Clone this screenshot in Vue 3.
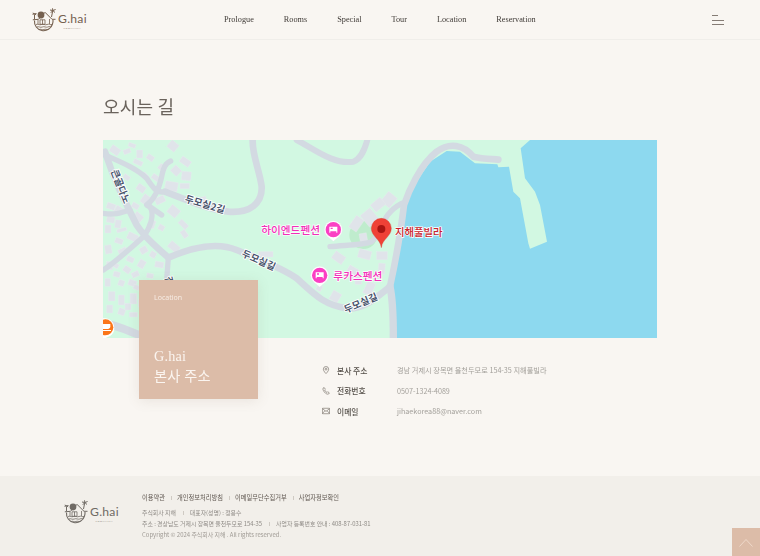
<script setup>
const navItems = ['Prologue', 'Rooms', 'Special', 'Tour', 'Location', 'Reservation']
const info = [
  { icon: 'pin', label: '본사 주소', value: '경남 거제시 장목면 율천두모로 154-35 지해풀빌라' },
  { icon: 'phone', label: '전화번호', value: '0507-1324-4089' },
  { icon: 'mail', label: '이메일', value: 'jihaekorea88@naver.com' }
]
const footerLinks = ['이용약관', '개인정보처리방침', '이메일무단수집거부', '사업자정보확인']
const logoStrokes = [
  ['M.8 11.800L6.500 11.300L13 4.300L20 11.300L23.500 11.300', 1],
  ['M2.500 12.500A9.200 9.200 0 0 0 20.500 16A9 9 0 0 0 21 12', 1.1],
  ['M4 16.500c2-1 3.500 1 5.500 0s3.500 1 5.500 0 3.500.7 5 0M4.800 19c2-1 3.500 1 5.500 0s3.500.8 5.500 0 2-.4 3-.6M7 21.500c2-.8 3.500.8 5 0s2.500.3 4 0', .8],
  ['M6 12v4.500M17.500 11v5M8 11.800h5v4.500h-5zM10.500 11.800v4.500', .8],
  ['M19.500 9L20.800 2.500M20.800 2.500L18 2M20.800 2.500L23.600 1.500M20.800 2.500L18.800 4.800M20.800 2.500L23 4.500M20.800 2.500L20.500 .3', 1],
  ['M2.500 11V6.500M.5 6.300L4.500 5.500M.8 5L4.200 6.800', 1]
]
const buildings = [
  [30,35,30,22,35],[70,42,22,14,-20],[85,25,22,12,20],[110,45,18,24,0],[100,75,28,14,25],[140,60,22,16,35],
  [205,20,28,26,40],[175,90,24,18,40],[240,70,32,20,35],[215,95,26,24,45],[245,110,28,26,5],[155,120,24,16,35],
  [195,140,38,28,10],[125,180,24,28,35],[165,185,30,20,-25],[240,145,28,16,0],[300,185,20,22,-15],[205,215,32,28,40],
  [100,235,28,24,40],[235,260,30,16,45],[245,285,16,24,-35],[205,325,34,22,40],[150,350,18,18,30],[120,335,22,20,-30],
  [82,295,32,22,25],[45,310,24,16,20],[45,255,18,24,10],[20,245,24,18,10],[20,205,26,18,20],[45,215,24,20,30],
  [15,270,18,24,0],[50,280,30,10,-15],[15,330,20,26,-10],[55,340,26,16,-25],[80,365,22,16,25],[115,375,20,24,30],
  [165,380,26,18,10],[70,395,22,18,35],[40,410,20,16,15],[95,410,22,16,-25],[20,380,18,24,0],[15,430,16,24,0],
  [55,435,18,18,20],[85,435,24,18,20],[25,470,20,28,0],[55,480,18,30,0],[90,475,20,32,0],[20,510,18,24,0],
  [55,520,20,20,20],[88,532,24,14,0],[115,492,16,24,0],[475,350,44,16,0],[755,245,28,42,35],[790,225,38,44,-40],
  [850,175,34,38,40],[815,195,38,28,-40],[780,295,22,36,-10],[775,345,38,26,15],[698,355,36,26,35],
  [740,395,32,32,30],[830,350,32,24,0],[835,385,20,32,5],[795,440,26,40,25],[765,420,20,28,0],[692,470,28,30,30],[650,450,16,18,30],
  [110,150,26,20,35],[60,175,20,16,40],[95,205,22,16,30],[70,120,20,14,35],[125,115,20,16,45],[145,255,20,24,20],
  [175,270,18,16,30],[100,450,18,14,20],[140,415,20,14,10],[75,505,18,20,0],[120,440,18,14,30],[40,385,16,14,30]
]
</script>

<template>
  <div class="page">
    <header class="header">
      <a class="logo">
        <svg class="logo-mark" viewBox="0 0 24 24" aria-hidden="true">
          <circle cx="9" cy="7" r="3.400" />
          <path v-for="(s, i) in logoStrokes" :key="i" :d="s[0]" :stroke-width="s[1]" />
        </svg>
        <span class="logo-text"><b>G.hai</b><small>POOLVILLA</small></span>
      </a>
      <nav class="nav">
        <a v-for="item in navItems" :key="item">{{ item }}</a>
      </nav>
      <button class="burger" aria-label="menu"><i class="short"></i><i></i><i></i></button>
    </header>

    <main class="main">
      <h1>오시는 길</h1>
      <div class="map">
        <svg viewBox="9 15 1662 594" preserveAspectRatio="none" aria-label="지도">
          <rect x="9" y="15" width="1662" height="594" fill="#d2f8e2" />
          <path fill="#8dd9ef" d="M1290 15L1262 40L1275 130L1305 170L1320 210L1341 320L1290 341L1285 325L1260 190L1240 170L1227 95L1195 97L1192 88L1125 85L1080 50L1040 48L990 80L950 140L910 215L890 330L877 410L887 415L872 450L880 480L880 609L1671 609L1671 15Z" />
          <ellipse cx="790" cy="300" rx="42" ry="42" fill="#bfeccd" />
          <g fill="#e0e4ea" stroke="#e8ebef" stroke-width="1">
            <rect v-for="(b, i) in buildings" :key="i" :x="b[0]" :y="b[1]" :width="b[2]" :height="b[3]" :transform="`rotate(${b[4]} ${b[0] + b[2] / 2} ${b[1] + b[3] / 2})`" />
          </g>
          <g fill="none" stroke="#d3dae2" stroke-width="20" stroke-linecap="round" stroke-linejoin="round">
            <path d="M458 15C456 60 480 110 485 155C487 205 450 235 385 230C320 222 260 195 195 170" />
            <path d="M590 15C640 40 700 90 760 80C785 70 795 40 802 15" stroke-width="18" />
            <path d="M15 60C60 80 110 100 140 130C160 160 170 175 195 170" stroke-width="16" />
            <path d="M212 78C195 85 190 100 185 125C175 170 160 195 140 210C150 215 170 230 185 240" stroke-width="16" />
            <path d="M150 215C165 240 150 280 130 305" stroke-width="16" />
            <path d="M15 50C40 130 70 190 110 270C135 310 175 340 205 368C280 335 350 320 410 345C480 375 540 395 590 430C640 475 670 510 740 520C790 525 825 490 870 455C885 385 900 310 912 210C925 170 960 90 1010 50C1050 20 1090 30 1120 65C1150 72 1180 72 1195 74" />
            <path d="M130 305C70 360 40 385 10 405M10 235C40 240 60 235 90 225" stroke-width="16" />
            <path d="M205 368L200 435" stroke-width="16" />
            <path d="M690 335C740 330 790 330 815 320C850 290 840 240 905 205" stroke-width="16" />
            <path d="M870 455C880 500 880 560 880 609" stroke-width="22" />
            <path d="M10 565C50 570 90 590 130 605" stroke-width="24" />
          </g>
          <g class="road-label">
            <text transform="translate(52 158) rotate(68)">큰골다노</text>
            <text transform="translate(312 218) rotate(17)">두모실2길</text>
            <text transform="translate(472 385) rotate(24)">두모실길</text>
            <text transform="translate(786 514) rotate(-23)">두모실길</text>
            <text transform="translate(197 440) rotate(75)">길</text>
          </g>
          <g class="poi">
            <g fill="#fff" stroke="#e4e8ea" stroke-width="1">
              <circle cx="700" cy="284" r="27" />
              <path d="M680 302L700 319L720 302z" />
              <circle cx="659" cy="421" r="27" />
              <path d="M639 439L659 456L679 439z" />
            </g>
            <circle cx="700" cy="284" r="23" fill="#fb3fc4" />
            <circle cx="659" cy="421" r="23" fill="#fb3fc4" />
            <path d="M688 275h24v18h-3v-4h-18v4h-3zM647 412h24v18h-3v-4h-18v4h-3z" fill="#fff" />
            <path d="M692 278h6v4h-6zM651 415h6v4h-6z" fill="#fb3fc4" />
            <text class="poi-pink" x="660" y="297" text-anchor="end">하이엔드펜션</text>
            <text class="poi-pink" x="700" y="435">루카스펜션</text>
            <path d="M9 550h8a29 29 0 0 1 14 52l-16 8h-6z" fill="#fff" />
            <circle cx="16" cy="577" r="24" fill="#fb7519" />
            <path d="M9 567h22v5a8 8 0 0 1-8 10h-14zM9 585h24v3h-24z" fill="#fff" />
          </g>
          <path d="M844 338c-3-26-30-34-30-58a30 30 0 0 1 60 0c0 24-27 32-30 58z" fill="#ef4136" stroke="#d62a22" stroke-width="1" />
          <circle cx="844" cy="282" r="12" fill="#aa1512" />
          <text class="poi-red" x="885" y="304">지해풀빌라</text>
        </svg>
      </div>

      <section class="below">
        <div class="card">
          <p class="card-label">Location</p>
          <h2>G.hai<br />본사 주소</h2>
        </div>
        <ul class="info">
          <li v-for="row in info" :key="row.label">
            <svg class="info-icon" viewBox="0 0 12 12" aria-hidden="true">
              <template v-if="row.icon === 'pin'">
                <path d="M6 .8a4 4 0 0 1 4 4c0 2.800-4 6.600-4 6.600S2 7.600 2 4.800A4 4 0 0 1 6 .8z" />
                <circle cx="6" cy="4.800" r="1.400" />
              </template>
              <path v-else-if="row.icon === 'phone'" d="M1.500 1.800l1.800-1 1.700 2.700-1.100 1c.6 1.500 2 3 3.600 3.700l1-1.100 2.500 1.800-1 1.500c-.8.800-2.700.4-4.800-1.100C2.800 7.300.8 3.800 1.500 1.800z" />
              <template v-else>
                <rect x=".6" y="1.900" width="10.800" height="8.200" rx=".6" />
                <path d="M.6 2.400L6 6.700l5.400-4.300M.6 9.800l3.900-4.300M11.400 9.800l-3.900-4.300" />
              </template>
            </svg>
            <strong>{{ row.label }}</strong>
            <span>{{ row.value }}</span>
          </li>
        </ul>
      </section>
    </main>

    <footer class="footer">
      <div class="footer-logo">
        <svg class="logo-mark" viewBox="0 0 24 24" aria-hidden="true">
          <circle cx="9" cy="7" r="3.400" />
          <path v-for="(s, i) in logoStrokes" :key="i" :d="s[0]" :stroke-width="s[1]" />
        </svg>
        <span class="logo-text"><b>G.hai</b><small>POOLVILLA</small></span>
      </div>
      <div class="footer-body">
        <div class="footer-links">
          <a v-for="l in footerLinks" :key="l">{{ l }}</a>
        </div>
        <p class="line"><span>주식회사 지해</span><span>대표자(성명) : 정용수</span></p>
        <p class="line"><span>주소 : 경상남도 거제시 장목면 율천두모로 154-35</span><span>사업자 등록번호 안내 : 408-87-031-81</span></p>
        <p class="copy">Copyright © 2024 주식회사 지해 . All rights reserved.</p>
      </div>
    </footer>

    <a class="to-top" aria-label="top">
      <svg viewBox="0 0 28 28" aria-hidden="true"><path d="M7.500 18.500L14 11.500l6.500 7" /></svg>
    </a>
  </div>
</template>

<style>
html, body { margin: 0; background: #f9f6f2; }
</style>

<style scoped>
.page {
  position: relative;
  width: 760px;
  height: 556px;
  overflow: hidden;
  display: flex;
  flex-direction: column;
  background: #f9f6f2;
  font-family: "Noto Sans CJK KR", "Noto Sans", sans-serif;
  color: #5f5750;
}
.header {
  flex: none;
  height: 39px;
  border-bottom: 1px solid #f0eeea;
  display: flex;
  align-items: center;
  padding: 0 36px 0 32px;
}
.logo, .footer-logo { display: flex; align-items: center; color: #75604f; }
.footer-logo { color: #6f6a64; }
.logo-mark { width: 24px; height: 24px; flex: none; fill: none; stroke: currentColor; }
.logo-mark circle { fill: currentColor; stroke: none; }
.logo-text { display: flex; flex-direction: column; align-items: center; margin: 4px 0 0 2px; }
.logo-text b {
  font: 400 12.200px/12px Lato, sans-serif;
  letter-spacing: .25px;
}
.logo-text small {
  margin-top: 2px;
  font: 400 2.500px/3px "Open Sans", sans-serif;
  letter-spacing: .5px;
  opacity: .8;
}
.nav, .info, .footer-body, h1, .card > * { will-change: transform; }
.nav {
  position: absolute;
  left: 224px;
  top: 0;
  height: 39px;
  display: flex;
  align-items: center;
  gap: 30px;
  font: 400 8.250px "Liberation Serif", serif;
  color: #3f3a36;
}
.burger {
  margin-left: auto;
  margin-top: 1px;
  width: 12px;
  padding: 0;
  border: 0;
  background: none;
  display: flex;
  flex-direction: column;
  gap: 3.400px;
}
.burger i { display: block; width: 12px; height: 1px; background: #857c75; }
.burger i.short { width: 6px; }
.main {
  flex: 1;
  padding: 0 103px;
  display: flex;
  flex-direction: column;
}
h1 {
  margin: 53px 0 21px;
  height: 26px;
  font: 400 18px/26px "Noto Sans CJK KR", sans-serif;
  color: #6a635c;
  letter-spacing: .2px;
}
.map { height: 198px; width: 554px; flex: none; }
.map svg { display: block; width: 100%; height: 100%; }
.road-label text {
  font: 700 29px "Noto Sans CJK KR", sans-serif;
  fill: #46526a;
  stroke: #fff;
  stroke-width: 5px;
  paint-order: stroke;
  text-anchor: middle;
}
.poi-pink {
  font: 500 32px "Noto Sans CJK KR", sans-serif;
  fill: #f230b8;
  stroke: #fff;
  stroke-width: 4px;
  paint-order: stroke;
}
.poi-red {
  font: 500 31px "Noto Sans CJK KR", sans-serif;
  fill: #c8242b;
  stroke: #fff;
  stroke-width: 4px;
  paint-order: stroke;
}
.below { display: flex; position: relative; }
.card {
  flex: none;
  width: 119px;
  height: 119px;
  margin: -58px 0 0 36px;
  padding: 13px 15px;
  box-sizing: border-box;
  background: #dcbca8;
  box-shadow: 0 2px 12px rgba(120, 100, 80, .12);
  color: #fff;
  display: flex;
  flex-direction: column;
  justify-content: space-between;
  position: relative;
}
.card-label { margin: 0; font: 400 7px/10px "Noto Sans", sans-serif; color: #f6ebe3; }
.card h2 {
  margin: 0;
  font: 400 14.200px/20px "Liberation Serif", "Noto Sans CJK KR", serif;
  color: #fbf5f0;
  letter-spacing: .2px;
}
.info {
  list-style: none;
  margin: 25px 0 0 64px;
  padding: 0;
  display: flex;
  flex-direction: column;
  gap: 6px;
}
.info li { display: flex; align-items: center; height: 14.500px; }
.info-icon {
  width: 8px;
  height: 8px;
  margin-right: 7px;
  fill: none;
  stroke: #6b645d;
  stroke-width: .9;
  flex: none;
}
.info strong { width: 60px; font-size: 7.800px; font-weight: 500; color: #55504a; }
.info span { font-size: 7.200px; color: #a3a09b; white-space: nowrap; }
.footer {
  flex: none;
  height: 80px;
  background: #f2efea;
  display: flex;
  padding: 16px 0 0 64px;
  box-sizing: border-box;
}
.footer-logo { align-self: flex-start; flex: none; width: 57px; margin: 8px 21px 0 0; }
.footer-links { display: flex; font-size: 6.250px; line-height: 12px; color: #5f5750; margin-bottom: 3px; }
.footer-links a + a { margin-left: 6px; padding-left: 6px; position: relative; }
.footer-links a + a::before, .line span + span::before {
  content: "";
  position: absolute;
  left: 0;
  top: 4px;
  width: 1px;
  height: 4px;
  background: #cfcac3;
}
.line, .copy { margin: 0; font-size: 5.900px; line-height: 11px; color: #8e8a85; white-space: nowrap; }
.line span + span { margin-left: 7px; padding-left: 7px; position: relative; display: inline-block; }
.copy { font-size: 5.950px; color: #9f9a94; }
.to-top {
  position: absolute;
  right: 0;
  bottom: 0;
  width: 28px;
  height: 28px;
  background: #dcbca8;
}
.to-top svg { display: block; width: 28px; height: 28px; fill: none; stroke: #f2dfd2; stroke-width: .8; }
</style>
